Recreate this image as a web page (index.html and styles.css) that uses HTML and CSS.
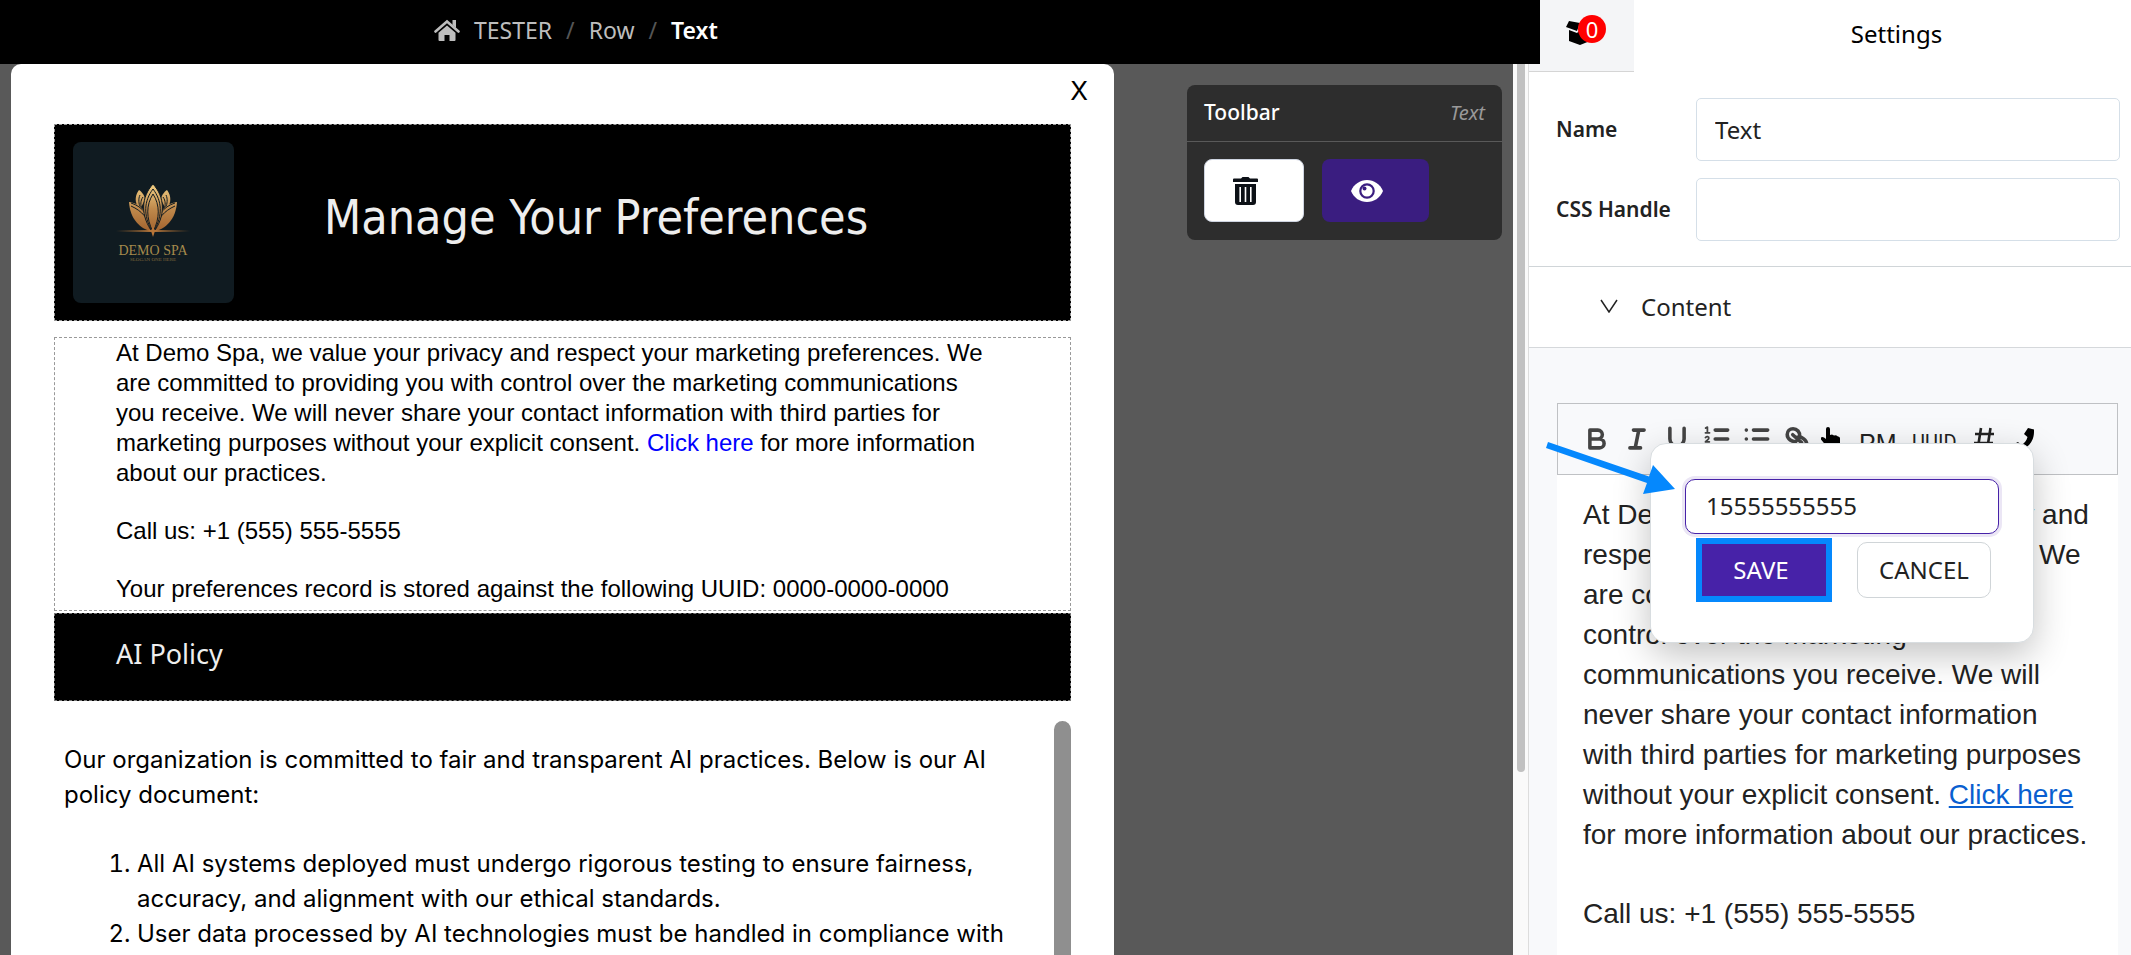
FILE: index.html
```html
<!DOCTYPE html>
<html lang="en">
<head>
<meta charset="utf-8">
<title>Preference page editor</title>
<link rel="stylesheet" href="styles.css">
</head>
<body class="app">
<main class="stage">
  <header class="topbar">
    <nav class="crumbs" aria-label="Breadcrumb">
      <svg class="crumb-home" viewBox="0 0 26 22" aria-hidden="true"><path d="M1.500 12.500L13 2.500l11.500 10" fill="none" stroke="currentColor" stroke-width="2.600" stroke-linecap="round"/><path d="M18.500 1h3.500v8l-3.500-3zM13 6.500l8.500 7.300V21a1 1 0 0 1-1 1H15.500v-6h-5v6H5.500a1 1 0 0 1-1-1v-7.200z" fill="currentColor"/></svg>
      <a class="crumb" href="#tester">TESTER</a>
      <span class="crumb-sep">/</span>
      <a class="crumb" href="#row">Row</a>
      <span class="crumb-sep">/</span>
      <span class="crumb-current">Text</span>
    </nav>
  </header>
  <div class="workspace">
    <div class="canvas">
      <section class="card">
        <button class="close" type="button" aria-label="Close">X</button>
        <div class="hero">
          <svg class="logo" viewBox="0 0 161 161" role="img" aria-label="Demo Spa">
            <defs>
              <linearGradient id="gold" gradientUnits="userSpaceOnUse" x1="0" y1="43" x2="0" y2="90"><stop offset="0" stop-color="#f0cd83"/><stop offset=".5" stop-color="#c08a4c"/><stop offset="1" stop-color="#a1622e"/></linearGradient>
              <linearGradient id="rule" x1="0" x2="1" y1="0" y2="0"><stop offset="0" stop-color="#8a5a2a" stop-opacity="0"/><stop offset=".5" stop-color="#bd7a3c"/><stop offset="1" stop-color="#8a5a2a" stop-opacity="0"/></linearGradient>
              <g id="petals">
                <path d="M66 48c-4 5-4 11-2 15l3 4 5-9c0-4-3-8-6-10z" fill="url(#gold)"/>
                <path d="M67 53c-2 4-1 9 0 12M70 55c-3 4-2 8-2 11" fill="none" stroke="#101b21"/>
                <path d="M56 60c9 1 20 8 24 30-13-3-23-13-24-30z" fill="url(#gold)"/>
                <path d="M58 61c12 4 18 12 21 27M58 64c11 5 17 12 21 25" fill="none" stroke="#101b21" stroke-width="1"/>
              </g>
            </defs>
            <rect width="161" height="161" rx="8" fill="#101b21"/>
            <use href="#petals"/>
            <use href="#petals" transform="matrix(-1 0 0 1 160 0)"/>
            <path d="M80 42c-12 13-13 32 0 49 13-17 12-36 0-49z" fill="url(#gold)" stroke="#101b21"/>
            <path d="M80 47c-9 12-10 26-1 42M80 47c9 12 10 26 1 42M80 52c-7 11-7 24 0 38M80 52c7 11 7 24 0 38" fill="none" stroke="#101b21" stroke-width="1"/>
            <rect x="43" y="88" width="74" height="2" fill="url(#rule)"/>
            <path d="M80 84l2 5-2 6-2-6z" fill="#b87538"/>
            <text class="logo-name" x="80" y="113" text-anchor="middle">DEMO SPA</text>
            <text class="logo-tag" x="80" y="119" text-anchor="middle">SLOGAN ONE HERE</text>
          </svg>
          <h1 class="hero-title">Manage Your Preferences</h1>
        </div>
        <div class="copy">
          <p class="copy-par">At Demo Spa, we value your privacy and respect your marketing preferences. We are committed to providing you with control over the marketing communications you receive. We will never share your contact information with third parties for marketing purposes without your explicit consent. <a class="copy-link" href="#privacy">Click here</a> for more information about our practices.</p>
          <p class="copy-par">Call us: +1 (555) 555-5555</p>
          <p class="copy-par">Your preferences record is stored against the following UUID: 0000-0000-0000</p>
        </div>
        <h2 class="policy-head">AI Policy</h2>
        <div class="policy">
          <div class="policy-body">
            <p class="policy-par">Our organization is committed to fair and transparent AI practices. Below is our AI policy document:</p>
            <ol class="policy-list">
              <li>All AI systems deployed must undergo rigorous testing to ensure fairness, accuracy, and alignment with our ethical standards.</li>
              <li>User data processed by AI technologies must be handled in compliance with</li>
            </ol>
          </div>
          <div class="policy-thumb"></div>
        </div>
      </section>
      <aside class="tools">
        <div class="tools-head"><h2 class="tools-title">Toolbar</h2><em class="tools-kind">Text</em></div>
        <div class="tools-row">
          <button class="tool tool-delete" type="button" aria-label="Delete"><svg class="icon-trash" viewBox="0 0 25 28"><path d="M1 1.500h7L9.500 0h6L17 1.500h7a1 1 0 0 1 1 1V5H0V2.500a1 1 0 0 1 1-1zM2 7h21v18a3 3 0 0 1-3 3H5a3 3 0 0 1-3-3z" fill="#0d1117"/><path d="M7.200 10v15M12.500 10v15M17.800 10v15" stroke="#fff" stroke-width="1.600"/></svg></button>
          <button class="tool tool-view" type="button" aria-label="Preview"><svg class="icon-eye" viewBox="0 0 32 22"><path d="M0 11C3 4 9 0 16 0s13 4 16 11c-3 7-9 11-16 11S3 18 0 11z" fill="#fff"/><circle cx="16" cy="11" r="6.700" fill="none" stroke="#3a1d80" stroke-width="2.200"/><circle cx="13.500" cy="8.500" r="2" fill="#3a1d80"/></svg></button>
        </div>
      </aside>
    </div>
    <div class="scroll"><div class="scroll-thumb"></div></div>
  </div>
</main>
<aside class="panel">
  <div class="panel-tabs">
    <button class="tab-box" type="button" aria-label="Components, 0">
      <svg class="icon-box" viewBox="0 0 26 24"><path d="M3 0l11 2-3 8L0 6zM14 2l9-2 3 6-10 4zM3 9l8 3 3-3 10 2v9l-10 4-11-4z"/></svg>
      <span class="badge">0</span>
    </button>
    <h2 class="panel-title">Settings</h2>
  </div>
  <div class="fields">
    <label class="label" for="name">Name</label><input class="field" id="name" type="text" value="Text">
    <label class="label" for="handle">CSS Handle</label><input class="field" id="handle" type="text">
  </div>
  <button class="section" type="button"><svg class="icon-chevron" viewBox="0 0 18 14"><path d="M1 1l8 12 8-12" fill="none" stroke="currentColor" stroke-width="1.500"/></svg>Content</button>
  <div class="content">
    <div class="editor">
      <div class="editor-bar">
        <button class="fmt" type="button" aria-label="Bold"><svg class="fmt-icon" viewBox="0 0 18 18"><path d="M5 4h4.500a2.500 2.500 0 0 1 0 5H5zM5 9h5.500a2.500 2.500 0 0 1 0 5H5z"/></svg></button>
        <button class="fmt" type="button" aria-label="Italic"><svg class="fmt-icon" viewBox="0 0 18 18"><path d="M7 4h6M5 14h6M8 14l2-10"/></svg></button>
        <button class="fmt" type="button" aria-label="Underline"><svg class="fmt-icon" viewBox="0 0 18 18"><path d="M5 3v6a4 4 0 0 0 8 0V3"/></svg></button>
        <button class="fmt" type="button" aria-label="Numbered list"><svg class="fmt-icon" viewBox="0 0 18 18"><path d="M8 4h7M8 9h7M8 14h7"/><path class="fmt-fine" d="M2.600 2.800l1-.5v3.200M2.500 5.500h2.300M2.500 8.200c.5-1 2.100-.6 1.900.4 0 .6-1 1.100-1.900 2h2.200"/></svg></button>
        <button class="fmt" type="button" aria-label="Bulleted list"><svg class="fmt-icon" viewBox="0 0 18 18"><path d="M7 4h8M7 9h8M7 14h8M3 4h.01M3 9h.01M3 14h.01"/></svg></button>
        <button class="fmt" type="button" aria-label="Link"><svg class="fmt-icon" viewBox="0 0 18 18"><path d="M8.500 10.200C6.300 11 3.500 9 3.500 6.500 3.500 4.500 5 3.200 6.800 3.200c2.200 0 4 2 3.700 4.300M6.600 6.600l5 4.400M9.200 8c2-.8 5.300 1.500 5.300 4 0 2-1.500 3-3.300 3-2.200 0-3.700-2-3.200-4.300"/></svg></button>
        <button class="fmt fmt-hand" type="button" aria-label="Button"><svg class="icon-hand" viewBox="0 0 19 24"><path d="M5 2a2 2 0 0 1 4 0v6l2-.5 2 1 2-.3 2 1.300c1.500 0 2 1 2 2V17l-2 7H6l-1.500-6L0 12.500c-1-2 1-3.500 3-2L5 12z"/></svg></button>
        <button class="fmt fmt-pm" type="button">PM</button>
        <button class="fmt fmt-uuid" type="button">UUID</button>
        <button class="fmt fmt-hash" type="button" aria-label="Number"><svg class="icon-hash" viewBox="0 0 22 24"><path d="M8 1L4.500 23M17.500 1L14 23M2 7h19M1 16h19" fill="none" stroke="#222" stroke-width="2.600"/></svg></button>
        <button class="fmt fmt-phone" type="button" aria-label="Phone"><svg class="icon-phone" viewBox="0 0 22 22"><path d="M15 0l6 1.500V4C21 14 14 22 4 22H1.500L0 16.500 5 14l3 3c4-2 5.500-4.500 6.500-8L11 6z"/></svg></button>
      </div>
      <div class="editor-text">
        <p class="editor-par">At Demo Spa, we value your privacy and respect your marketing preferences. We are committed to providing you with control over the marketing communications you receive. We will never share your contact information with third parties for marketing purposes without your explicit consent. <a class="editor-link" href="#privacy">Click here</a> for more information about our practices.</p>
        <p class="editor-par">Call us: +1 (555) 555-5555</p>
      </div>
      <form class="popover">
        <input class="phone" type="text" value="15555555555" aria-label="Phone number">
        <div class="popover-actions">
          <button class="save" type="button">SAVE</button>
          <button class="cancel" type="button">CANCEL</button>
        </div>
        <svg class="pointer" viewBox="0 0 130 54" aria-hidden="true"><path d="M2 0l101 34.500L107 23l22 24-32 5 4-11L0 6z" fill="#0588fd"/></svg>
      </form>
    </div>
  </div>
</aside>
</body>
</html>
```
FILE: styles.css
```css
* { box-sizing: border-box; }
h1, h2, p { margin: 0; font-weight: 400; }
button, input { font: inherit; color: inherit; margin: 0; }
svg { display: block; flex: none; }

.app {
  margin: 0;
  height: 100vh;
  display: flex;
  overflow: hidden;
  font-family: "Noto Sans", sans-serif;
  font-size: 24px;
  color: #222;
}

/* stage */
.stage { flex: 1; min-width: 0; display: flex; flex-direction: column; }
.topbar {
  flex: none;
  height: 64px;
  margin-right: -11px;
  padding: 0 434px 4px;
  display: flex;
  align-items: center;
  background: #000;
  position: relative;
  z-index: 2;
}
.crumbs { display: flex; align-items: center; white-space: nowrap; font-size: 23px; gap: 14px; color: #bdbdbd; }
.crumb-home { width: 26px; height: 22px; }
.crumb { color: inherit; text-decoration: none; }
.crumb-sep { color: #555; }
.crumb-current { color: #fff; font-weight: 600; }

.workspace { flex: 1; min-height: 0; display: flex; }
.canvas {
  flex: 1;
  min-width: 0;
  display: flex;
  align-items: stretch;
  overflow: hidden;
  gap: 73px;
  padding: 0 11px;
  background: #595959;
}
.scroll { flex: none; width: 16px; padding: 0 3px 0 4px; background: #fafafa; border-right: 1px solid #ddd; }
.scroll-thumb { height: 708px; background: #c1c1c1; border-radius: 0 0 4px 4px; }

.card {
  flex: 1;
  min-width: 0;
  padding: 0 43px;
  display: flex;
  flex-direction: column;
  background: #fff;
  border-radius: 10px 10px 0 0;
}
.close {
  flex: none;
  align-self: flex-end;
  margin-right: -25px;
  padding: 8px 8px 14px;
  border: 0;
  background: none;
  color: #000;
  font: 26px/38px "Inter", sans-serif;
}
.hero {
  flex: none;
  display: flex;
  align-items: center;
  gap: 90px;
  height: 197px;
  padding: 0 18px;
  background: #000;
  border: 1px dashed #999;
}
.logo { width: 161px; height: 161px; }
.logo-name { font: 14px "Liberation Serif", serif; fill: #a58a4c; }
.logo-tag { font: 5px "Liberation Serif", serif; fill: #80693c; }
.hero-title { padding-bottom: 12px; font: 48px/60px "DejaVu Sans Condensed", "Noto Sans", sans-serif; color: #eee; white-space: nowrap; }

.copy {
  flex: none;
  margin-top: 16px;
  padding: 0 79px 0 61px;
  height: 274px;
  border: 1px dashed #999;
  color: #000;
  font: 24px/30px "Liberation Sans", Arial, sans-serif;
}
.copy-par { margin-bottom: 28px; }
.copy-link { color: #00f; text-decoration: none; }
.policy-head {
  flex: none;
  margin-top: 2px;
  height: 88px;
  padding: 0 61px 8px;
  display: flex;
  align-items: center;
  background: #000;
  border: 1px dashed #777;
  color: #eee;
  font-size: 27px;
}
.policy { flex: 1; min-height: 0; display: flex; margin-top: 20px; overflow: hidden; }
.policy-body {
  flex: 1;
  padding: 21px 40px 0 10px;
  color: #000;
  font: 24px/35px "Inter", sans-serif;
}
.policy-list { margin: 34px 0 0; padding-left: 73px; }
.policy-thumb { flex: none; width: 17px; background: #8f8f8f; border-radius: 9px 9px 0 0; }

.tools { flex: none; align-self: flex-start; width: 315px; height: 155px; margin-top: 21px; background: #2d2d2d; border-radius: 8px; }
.tools-head {
  height: 57px;
  padding: 0 17px 2px;
  display: flex;
  align-items: center;
  justify-content: space-between;
  border-bottom: 1px solid #595959;
}
.tools-title { font-size: 21px; font-weight: 500; color: #fff; }
.tools-kind { font-size: 20px; color: #999; }
.tools-row { display: flex; gap: 18px; padding: 17px; }
.tool { height: 63px; padding: 0 29px; border: 0; border-radius: 8px; display: flex; align-items: center; }
.tool-delete { width: 100px; background: #fff; border: 1px solid #ced4e0; padding: 0 28px; }
.tool-view { width: 107px; background: #3a1d80; }
.icon-trash { width: 25px; height: 28px; }
.icon-eye { width: 32px; height: 22px; }

/* settings panel */
.panel { flex: none; width: 28.25%; display: flex; flex-direction: column; background: #fff; }
.panel-tabs { flex: none; display: flex; height: 72px; }
.tab-box {
  flex: none;
  width: 105px;
  padding: 0 0 6px 37px;
  border: 0;
  border-bottom: 1px solid #d5d5d5;
  background: #f4f5f7;
  display: flex;
  align-items: center;
  position: relative;
}
.icon-box { width: 26px; height: 24px; }
.badge {
  position: absolute;
  left: 49px;
  top: 15px;
  width: 28px;
  height: 28px;
  border-radius: 50%;
  background: #f00;
  color: #fff;
  font-size: 22px;
  line-height: 28px;
  text-align: center;
}
.panel-title { flex: 1; padding: 0 0 6px 28px; align-self: center; text-align: center; font-size: 24px; color: #000; }
.fields {
  flex: none;
  display: grid;
  grid-template-columns: 123px 1fr;
  gap: 17px;
  align-items: center;
  padding: 26px 11px 25px 27px;
  border-bottom: 1px solid #d0d5d8;
}
.label { padding-bottom: 2px; font-size: 21px; font-weight: 600; white-space: nowrap; }
.field { width: 100%; height: 63px; padding: 0 18px 1px; border: 1px solid #d5dfe8; border-radius: 5px; background: #fff; }
.section {
  flex: none;
  height: 81px;
  padding: 0 71px 2px;
  display: flex;
  align-items: center;
  gap: 23px;
  border: 0;
  border-bottom: 1px solid #d5d8db;
  background: #fff;
}
.icon-chevron { width: 18px; height: 14px; }
.content { flex: 1; min-height: 0; padding: 55px 13px 0 28px; background: #f8f9fb; }
.editor { position: relative; height: 100%; background: #fff; }
.editor-bar { display: flex; height: 72px; padding: 19px 23px; border: 1px solid #bfc1c4; background: #f8f9fb; }
.fmt { flex: none; width: 40px; height: 32px; padding: 0; border: 0; background: none; color: #222; text-align: left; }
.fmt-icon { width: 32px; height: 32px; fill: none; stroke: #444; stroke-width: 2; stroke-linecap: round; stroke-linejoin: round; }
.fmt-fine { stroke-width: 1; }
.icon-hand { width: 19px; height: 24px; }
.fmt-pm { width: 53px; font: 25px/40px "Liberation Sans", Arial, sans-serif; }
.fmt-hand { width: 38px; }
.fmt-uuid { width: 61px; font: 20px/38px "Liberation Sans Narrow", "Roboto", sans-serif; }
.icon-hash { width: 22px; height: 24px; }
.icon-phone { width: 22px; height: 24px; }
.editor-text { padding: 20px 26px; font: 28px/40px "Liberation Sans", Arial, sans-serif; }
.editor-par { margin-bottom: 39px; }
.editor-link { color: #0a5fd0; }

.popover {
  position: absolute;
  top: 40px;
  right: 84px;
  width: 384px;
  height: 200px;
  padding: 35px 34px;
  background: #fff;
  border: 1px solid #d8dde0;
  border-radius: 16px;
  box-shadow: 0 12px 36px rgba(0, 0, 0, .24);
}
.phone {
  display: block;
  width: 100%;
  height: 55px;
  padding: 0 20px 2px;
  border: 1px solid #4722a8;
  border-radius: 10px;
  background: #fff;
  box-shadow: 0 0 0 3px #ebe6f5;
  outline: 0;
}
.popover-actions { display: flex; align-items: center; justify-content: space-between; padding: 4px 8px 0 11px; }
.save { width: 136px; height: 64px; padding: 0 6px 2px 0; border: 6px solid #0588fd; background: #4722a8; color: #fff; }
.cancel { width: 134px; height: 56px; padding: 0 0 2px; border: 1px solid #d0d5d8; border-radius: 10px; background: #fff; }
.pointer { position: absolute; left: -105px; top: -2px; width: 130px; height: 54px; }
```
